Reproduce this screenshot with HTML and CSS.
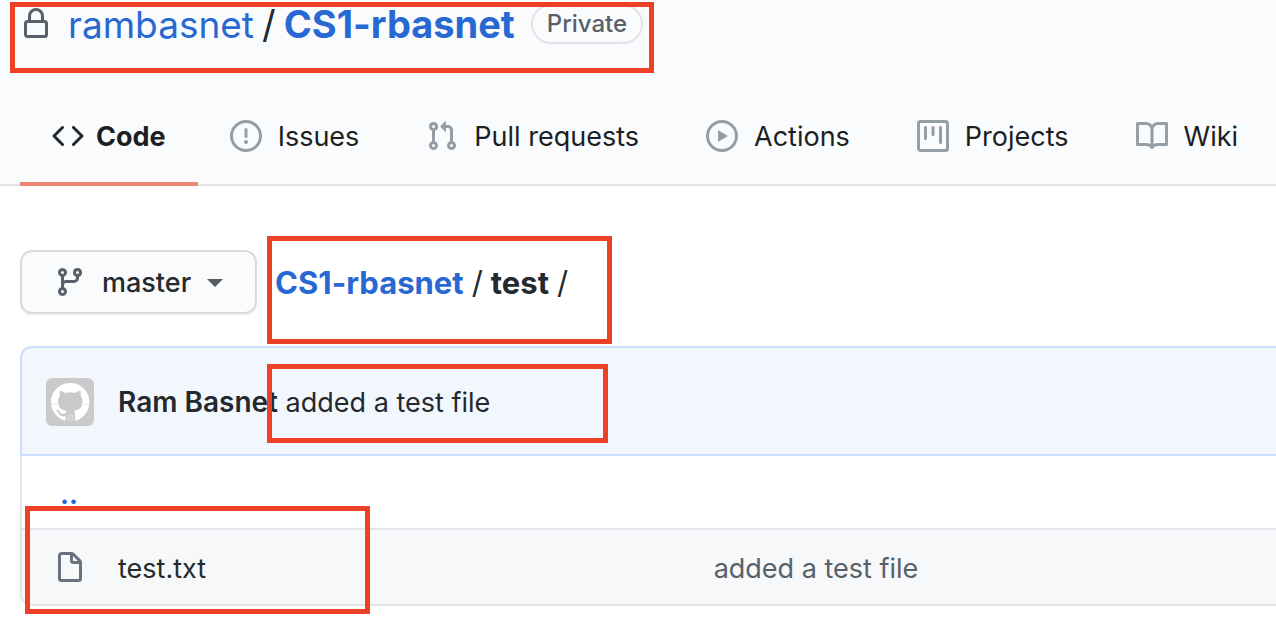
FILE: index.html
```html
<!DOCTYPE html>
<html lang="en">
<head>
<meta charset="utf-8">
<title>rambasnet/CS1-rbasnet</title>
<link rel="stylesheet" href="styles.css">
</head>
<body>
<header class="repo-header">
  <div class="repo-title">
    <svg class="icon icon-dark" viewBox="0 0 16 16" aria-hidden="true"><path fill-rule="evenodd" d="M4 4v2h-.25A1.75 1.75 0 002 7.75v5.5c0 .966.784 1.75 1.75 1.75h8.5A1.75 1.75 0 0014 13.25v-5.5A1.75 1.75 0 0012.25 6H12V4a4 4 0 10-8 0zm6.5 2V4a2.5 2.5 0 10-5 0v2h5zM12 7.5h.25a.25.25 0 01.25.25v5.5a.25.25 0 01-.25.25h-8.5a.25.25 0 01-.25-.25v-5.5a.25.25 0 01.25-.25H12z"/></svg>
    <h1 class="repo-name"><a class="owner" href="#">rambasnet</a><span class="slash">/</span><a class="strong" href="#">CS1-rbasnet</a></h1>
    <span class="badge">Private</span>
  </div>
  <nav class="tabs" aria-label="Repository">
    <a class="tab selected" href="#"><svg class="icon" viewBox="0 0 16 16" aria-hidden="true"><path fill-rule="evenodd" d="M4.72 3.22a.75.75 0 011.06 1.06L2.06 8l3.72 3.72a.75.75 0 11-1.06 1.06L.47 8.53a.75.75 0 010-1.06l4.25-4.25zm6.56 0a.75.75 0 10-1.06 1.06L13.94 8l-3.72 3.72a.75.75 0 101.06 1.06l4.25-4.25a.75.75 0 000-1.06l-4.25-4.25z"/></svg><span>Code</span></a>
    <a class="tab" href="#"><svg class="icon" viewBox="0 0 16 16" aria-hidden="true"><path fill-rule="evenodd" d="M8 1.5a6.5 6.5 0 100 13 6.5 6.5 0 000-13zM0 8a8 8 0 1116 0A8 8 0 010 8zm9 3a1 1 0 11-2 0 1 1 0 012 0zm-.25-6.25a.75.75 0 00-1.5 0v3.5a.75.75 0 001.5 0v-3.5z"/></svg><span>Issues</span></a>
    <a class="tab" href="#"><svg class="icon" viewBox="0 0 16 16" aria-hidden="true"><path fill-rule="evenodd" d="M7.177 3.073L9.573.677A.25.25 0 0110 .854v4.792a.25.25 0 01-.427.177L7.177 3.427a.25.25 0 010-.354zM3.75 2.5a.75.75 0 100 1.5.75.75 0 000-1.5zm-2.25.75a2.25 2.25 0 113 2.122v5.256a2.251 2.251 0 11-1.5 0V5.372A2.25 2.25 0 011.5 3.25zM11 2.5h-1V4h1a1 1 0 011 1v5.628a2.251 2.251 0 101.5 0V5A2.5 2.5 0 0011 2.5zm1 10.25a.75.75 0 111.5 0 .75.75 0 01-1.5 0zM3.75 12a.75.75 0 100 1.5.75.75 0 000-1.5z"/></svg><span>Pull requests</span></a>
    <a class="tab" href="#"><svg class="icon" viewBox="0 0 16 16" aria-hidden="true"><path fill-rule="evenodd" d="M1.5 8a6.5 6.5 0 1113 0 6.5 6.5 0 01-13 0zM8 0a8 8 0 100 16A8 8 0 008 0zM6.379 5.227A.25.25 0 006 5.442v5.117a.25.25 0 00.379.214l4.264-2.559a.25.25 0 000-.428L6.379 5.227z"/></svg><span>Actions</span></a>
    <a class="tab" href="#"><svg class="icon" viewBox="0 0 16 16" aria-hidden="true"><path fill-rule="evenodd" d="M1.75 0A1.75 1.75 0 000 1.75v12.5C0 15.216.784 16 1.75 16h12.5A1.75 1.75 0 0016 14.25V1.75A1.75 1.75 0 0014.25 0H1.75zM1.5 1.75a.25.25 0 01.25-.25h12.5a.25.25 0 01.25.25v12.5a.25.25 0 01-.25.25H1.75a.25.25 0 01-.25-.25V1.75zM11.75 3a.75.75 0 00-.75.75v7.5a.75.75 0 001.5 0v-7.5a.75.75 0 00-.75-.75zm-8.25.75a.75.75 0 011.5 0v5.5a.75.75 0 01-1.5 0v-5.5zM8 3a.75.75 0 00-.75.75v3.5a.75.75 0 001.5 0v-3.5A.75.75 0 008 3z"/></svg><span>Projects</span></a>
    <a class="tab" href="#"><svg class="icon" viewBox="0 0 16 16" aria-hidden="true"><path fill-rule="evenodd" d="M0 1.75A.75.75 0 01.75 1h4.253c1.227 0 2.317.59 3 1.501A3.744 3.744 0 0111.006 1h4.245a.75.75 0 01.75.75v10.5a.75.75 0 01-.75.75h-4.507a2.25 2.25 0 00-1.591.659l-.622.621a.75.75 0 01-1.06 0l-.622-.621A2.25 2.25 0 005.258 13H.75a.75.75 0 01-.75-.75V1.75zm8.755 3a2.25 2.25 0 012.25-2.25H14.5v9h-3.757c-.71 0-1.4.201-1.992.572l.004-7.322zm-1.504 7.324l.004-5.073-.002-2.253A2.25 2.25 0 005.003 2.5H1.5v9h3.757a3.75 3.75 0 011.994.574z"/></svg><span>Wiki</span></a>
  </nav>
</header>
<main class="content">
  <div class="file-nav">
    <button class="branch" type="button"><svg class="icon icon-dark" viewBox="0 0 16 16" aria-hidden="true"><path fill-rule="evenodd" d="M11.75 2.5a.75.75 0 100 1.5.75.75 0 000-1.5zm-2.25.75a2.25 2.25 0 113 2.122V6A2.5 2.5 0 0110 8.5H6a1 1 0 00-1 1v1.128a2.251 2.251 0 11-1.5 0V5.372a2.25 2.25 0 111.5 0v1.836A2.492 2.492 0 016 7h4a1 1 0 001-1v-.628A2.25 2.25 0 019.5 3.25zM4.25 12a.75.75 0 100 1.5.75.75 0 000-1.5zM3.5 3.25a.75.75 0 111.5 0 .75.75 0 01-1.5 0z"/></svg><span>master</span><span class="caret"></span></button>
    <div class="breadcrumb"><a class="strong" href="#">CS1-rbasnet</a><span>/</span><strong>test</strong><span>/</span></div>
  </div>
  <section class="files">
    <div class="commit">
      <svg class="avatar" viewBox="0 0 48 48" role="img" aria-label="Ram Basnet"><rect width="48" height="48" rx="6" fill="#cacaca"/><g transform="translate(5 5) scale(2.4)"><path fill="#fff" fill-rule="evenodd" d="M8 0C3.58 0 0 3.58 0 8c0 3.54 2.29 6.53 5.47 7.59.4.07.55-.17.55-.38 0-.19-.01-.82-.01-1.49-2.01.37-2.53-.49-2.69-.94-.09-.23-.48-.94-.82-1.13-.28-.15-.68-.52-.01-.53.63-.01 1.08.58 1.23.82.72 1.21 1.87.87 2.33.66.07-.52.28-.87.51-1.07-1.78-.2-3.64-.89-3.64-3.95 0-.87.31-1.59.82-2.15-.08-.2-.36-1.02.08-2.12 0 0 .67-.21 2.2.82.64-.18 1.32-.27 2-.27.68 0 1.36.09 2 .27 1.53-1.04 2.2-.82 2.2-.82.44 1.1.16 1.92.08 2.12.51.56.82 1.27.82 2.15 0 3.07-1.87 3.75-3.65 3.95.29.25.54.73.54 1.48 0 1.07-.01 1.93-.01 2.2 0 .21.15.46.55.38A8.013 8.013 0 0016 8c0-4.42-3.58-8-8-8z"/><path fill="none" stroke="#fff" stroke-opacity=".5" stroke-width=".35" d="M7.1 13v2.8M8 12.7v3.1M8.9 13v2.8"/><path fill="none" stroke="#cacaca" stroke-opacity=".6" stroke-width=".3" d="M.2 9l2.4-.2M13.4 8.8l2.4.2"/></g></svg>
      <p class="commit-text"><a class="author" href="#">Ram Basnet</a> <a class="message" href="#">added a test file</a></p>
    </div>
    <table class="file-table">
      <tbody>
        <tr class="parent"><td class="mark"><a class="strong" href="#">..</a></td><td class="name"></td><td></td></tr>
        <tr class="file"><td class="mark"><svg class="icon icon-file" viewBox="0 0 16 16" aria-hidden="true"><path fill-rule="evenodd" d="M3.75 1.5a.25.25 0 00-.25.25v11.5c0 .138.112.25.25.25h8.5a.25.25 0 00.25-.25V6H9.75A1.75 1.75 0 018 4.25V1.5H3.75zm5.75.56v2.19c0 .138.112.25.25.25h2.19L9.5 2.06zM2 1.75C2 .784 2.784 0 3.75 0h5.086c.464 0 .909.184 1.237.513l3.414 3.414c.329.328.513.773.513 1.237v8.086A1.75 1.75 0 0112.25 15h-8.5A1.75 1.75 0 012 13.25V1.75z"/></svg></td><td class="name"><a href="#">test.txt</a></td><td class="note"><a href="#">added a test file</a></td></tr>
      </tbody>
    </table>
  </section>
</main>
<div class="highlight highlight-title"></div>
<div class="highlight highlight-path"></div>
<div class="highlight highlight-commit"></div>
<div class="highlight highlight-file"></div>
</body>
</html>
```
FILE: styles.css
```css
* { box-sizing: border-box; }
body {
  margin: 0;
  position: relative;
  overflow-x: hidden;
  background: #fff;
  color: #24292e;
  font: 27px/34px Inter, "Liberation Sans", sans-serif;
}
a { color: #2868d2; text-decoration: none; }
.strong { font-weight: 700; }
.icon { display: block; flex: none; width: 32px; height: 32px; fill: #959da5; }
.icon-dark { fill: #586069; }
.icon-file { fill: #6a737d; }

.repo-header { background: #fafbfd; border-bottom: 2px solid #e1e4e8; }
.repo-title { display: flex; align-items: center; gap: 16px; height: 48px; padding-left: 20px; }
.repo-name { margin: 0; font-size: 38px; line-height: 48px; font-weight: 400; white-space: nowrap; }
.owner { font-size: 37px; }
.slash { margin: 0 8px; }
.badge {
  padding: 0 14px;
  border: 2px solid #e1e4e8;
  border-radius: 20px;
  color: #586069;
  font-size: 24px;
  line-height: 36px;
  font-weight: 500;
}
.tabs { display: flex; padding-left: 20px; margin-top: 40px; margin-bottom: -2px; }
.tab {
  display: flex;
  align-items: flex-start;
  gap: 16px;
  padding: 32px 35px 28px 32px;
  border-bottom: 4px solid transparent;
  color: #1b1f24;
  white-space: nowrap;
}
.tab.selected { gap: 12px; padding-right: 32px; border-bottom-color: #ec8571; font-weight: 700; }
.tab.selected .icon { fill: #24292e; }

.content { padding: 64px 0 34px 20px; }
.file-nav { display: flex; align-items: center; gap: 18px; margin-bottom: 32px; }
.branch {
  display: flex;
  align-items: center;
  gap: 16px;
  padding: 14px 32px 12px;
  border: 2px solid #d8dadb;
  border-radius: 12px;
  background: #fafbfc;
  box-shadow: 0 2px 0 #f4f5f6;
  color: #24292e;
  font: inherit;
  font-weight: 500;
}
.branch .icon { align-self: flex-start; }
.caret { border: 8px solid transparent; border-top-color: #555a5f; border-bottom: 0; }
.breadcrumb { display: flex; gap: 8px; padding-top: 2px; font-size: 31px; white-space: nowrap; }
.breadcrumb strong { font-weight: 700; }

.files { border-left: 2px solid #e1e4e8; border-bottom: 2px solid #e1e4e8; border-radius: 12px 0 0 12px; }
.commit {
  display: flex;
  align-items: center;
  gap: 24px;
  margin-left: -2px;
  padding: 30px 24px 28px;
  border: 2px solid #cbdffb;
  border-right: 0;
  border-radius: 12px 0 0 0;
  background: #f2f7fe;
}
.avatar { width: 48px; height: 48px; }
.commit-text { margin: 0; }
.author, .message, .name a { color: #24292e; }
.author { font-size: 28px; font-weight: 600; }
.file-table { width: 100%; table-layout: fixed; border-collapse: separate; border-spacing: 0; }
.file-table td { padding: 2px 0 0; }
.file-table .mark { width: 96px; padding-left: 32px; }
.file-table .name { width: 47.5%; }
.parent td { height: 72px; }
.file-table .parent .mark { padding: 6px 0 0 38px; }
.file td { height: 76px; border-top: 2px solid #e1e4e8; background: #f6f8fa; }
.file-table .file .name, .file-table .file .note { padding-top: 4px; }
.file td:first-child { border-bottom-left-radius: 10px; }
.note a { color: #586069; }

.highlight { position: absolute; border: 5px solid #ec4127; pointer-events: none; }
.highlight-title { left: 10px; top: 2px; width: 644px; height: 71px; }
.highlight-path { left: 267px; top: 236px; width: 345px; height: 108px; }
.highlight-commit { left: 267px; top: 364px; width: 341px; height: 79px; }
.highlight-file { left: 25px; top: 506px; width: 345px; height: 108px; }
```
